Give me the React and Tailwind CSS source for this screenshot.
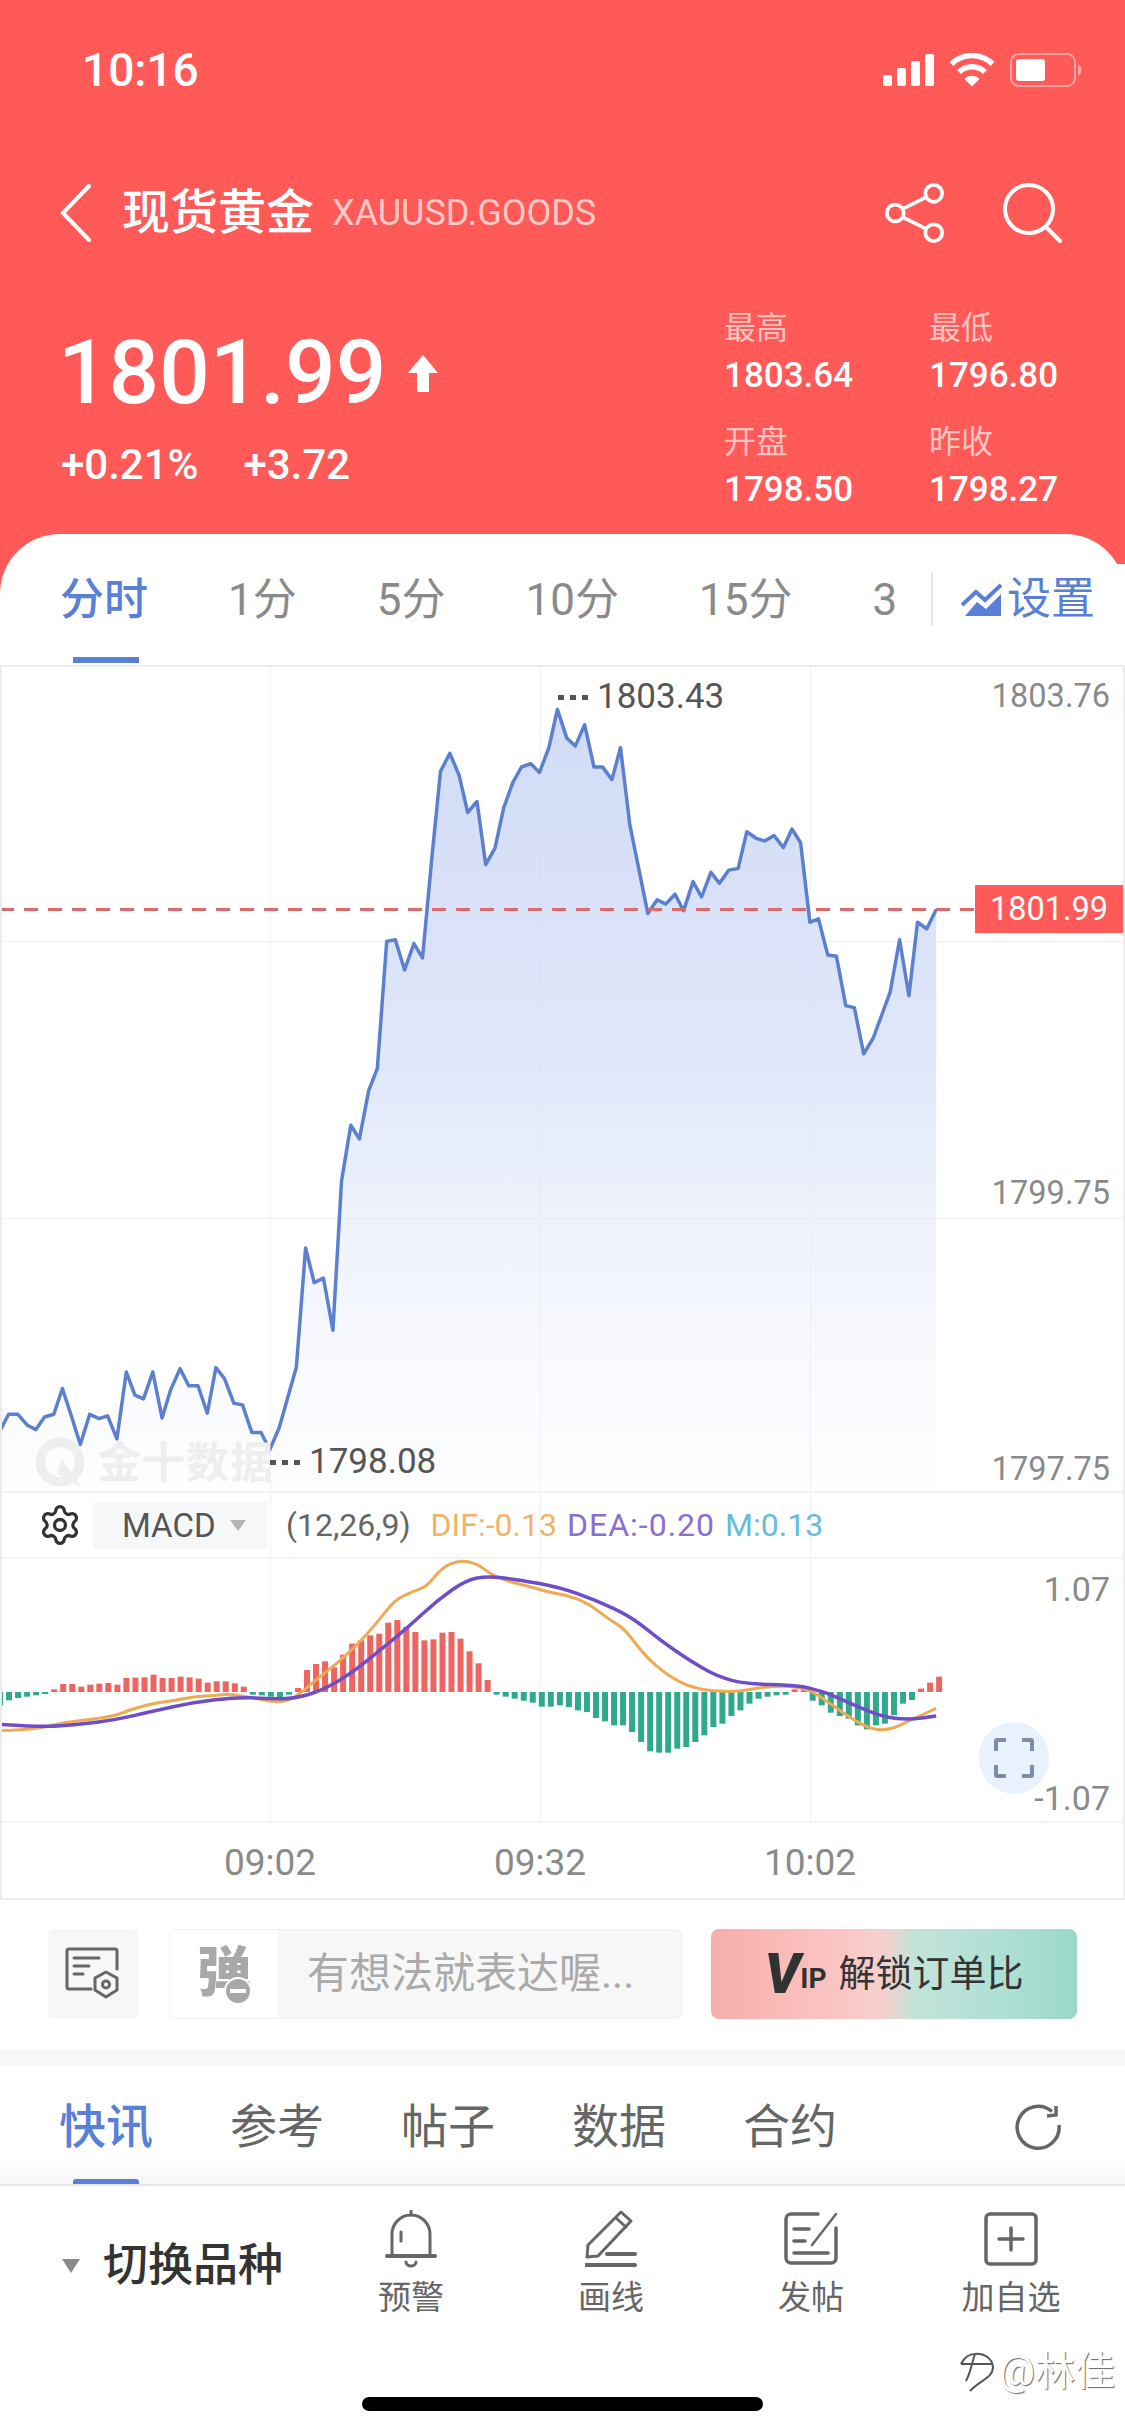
import { Settings } from 'lucide-react';

// traced from the reference, in zoomed-crop pixels
const PRICE_RAW = [[0,1405],[12,1375],[25,1375],[38,1395],[50,1403],[62,1380],[75,1375],[87,1328],[100,1380],[112,1430],[125,1375],[138,1383],[150,1378],[163,1420],[176,1298],[188,1340],[200,1347],[213,1298],[226,1382],[238,1330],[251,1292],[263,1323],[276,1323],[289,1373],[301,1290],[313,1310],[326,1355],[338,1358],[351,1408],[364,1408],[376,1440],[389,1400],[401,1345],[413,1290],[426,1072],[438,1135],[451,1127],[464,1222],[476,950],[489,848],[501,873],[514,785],[526,745],[539,513],[551,510],[564,565],[577,517],[589,543],[602,360],[614,203],[627,170],[640,210],[652,278],[665,258],[677,373],[690,343],[702,270],[715,223],[727,195],[740,189],[752,205],[765,160],[777,90],[790,142],[802,157],[815,118],[828,195],[840,195],[853,218],[865,160],[878,300],[890,378],[903,462],[916,437],[928,445],[941,427],[953,457],[966,404],[978,432],[991,387],[1003,407],[1016,383],[1029,380],[1041,313],[1054,325],[1066,330],[1079,320],[1092,342],[1104,308],[1116,333],[1129,478],[1141,472],[1154,538],[1166,540],[1179,630],[1191,634],[1204,718],[1217,690],[1229,648],[1241,605],[1254,510],[1267,612],[1279,478],[1292,490],[1305,455]];
const HIST = [-40,-25,-18,-14,-10,-6,8,24,24,16,22,25,27,22,42,43,44,52,42,42,46,44,40,28,32,32,26,16,-8,-10,-14,-16,-8,12,66,84,92,74,112,145,155,170,175,208,216,195,180,155,158,178,180,160,122,86,36,-8,-14,-20,-26,-32,-44,-44,-40,-45,-55,-60,-78,-88,-100,-100,-120,-150,-178,-182,-182,-170,-165,-150,-130,-105,-95,-72,-55,-35,-20,-14,-10,-8,8,8,-26,-40,-62,-72,-80,-100,-112,-100,-95,-70,-35,-24,10,28,46];
const DIF_RAW = [[0,812],[30,810],[60,803],[90,787],[120,780],[160,768],[180,750],[210,732],[240,722],[270,710],[300,706],[320,702],[350,712],[385,728],[410,716],[440,660],[470,610],[500,550],[525,490],[550,420],[575,395],[595,380],[615,325],[640,300],[665,310],[685,345],[710,365],[740,380],[765,397],[790,405],[820,430],[850,480],[870,505],[900,590],[930,645],[960,680],[990,693],[1030,695],[1060,682],[1100,677],[1130,690],[1160,735],[1190,780],[1215,808],[1240,810],[1265,785],[1305,745]];
const DEA_RAW = [[0,793],[60,802],[110,793],[160,780],[210,755],[270,727],[330,712],[370,715],[410,717],[450,690],[490,640],[530,570],[570,500],[610,420],[650,360],[680,348],[720,358],[780,382],[830,420],[880,470],[920,540],[960,600],[1000,650],[1040,672],[1110,675],[1150,695],[1190,735],[1230,770],[1265,780],[1305,768]];

const priceLine = PRICE_RAW.map(([x, y]) => [x / 1.394, 660 + y / 1.823]);
const macdPoint = ([x, y]) => [x / 1.394, 1460 + y / 3];
const toPoints = (pts) => pts.map(([x, y]) => `${x.toFixed(1)},${y.toFixed(1)}`).join(' ');

function smoothPath(pts) {
  let d = `M${pts[0][0]} ${pts[0][1]}`;
  for (let i = 1; i < pts.length - 1; i++) {
    const mx = (pts[i][0] + pts[i + 1][0]) / 2;
    const my = (pts[i][1] + pts[i + 1][1]) / 2;
    d += ` Q${pts[i][0]} ${pts[i][1]} ${mx} ${my}`;
  }
  const last = pts[pts.length - 1];
  return `${d} L${last[0]} ${last[1]}`;
}

function GridLines() {
  return (
    <>
      <div className="absolute top-0 bottom-0 left-[268px] w-px bg-[#eff1f4]" />
      <div className="absolute top-0 bottom-0 left-[538px] w-px bg-[#eff1f4]" />
      <div className="absolute top-0 bottom-0 left-[808px] w-px bg-[#eff1f4]" />
    </>
  );
}

function ExtremeDots() {
  return (
    <span className="flex gap-[6px]">
      <span className="h-[5px] w-[6px] bg-[#555555]" />
      <span className="h-[5px] w-[6px] bg-[#555555]" />
      <span className="h-[5px] w-[6px] bg-[#555555]" />
    </span>
  );
}

function PricePane() {
  const area = toPoints([...priceLine, [936, 1493], [0, 1493]]);
  return (
    <div className="relative h-[826px] border-b-2 border-[#f2f3f5]">
      <GridLines />
      <div className="absolute left-0 right-0 top-[274px] h-px bg-[#eff1f4]" />
      <div className="absolute left-0 right-0 top-[551px] h-px bg-[#eff1f4]" />
      <svg className="absolute inset-0" width="1121" height="826" viewBox="2 667 1121 826">
        <defs>
          <linearGradient id="priceFill" gradientUnits="userSpaceOnUse" x1="0" y1="709" x2="0" y2="1493">
            <stop offset="0" stopColor="#cbd7f5" stopOpacity="0.9" />
            <stop offset="0.45" stopColor="#d8e1f8" stopOpacity="0.8" />
            <stop offset="1" stopColor="#eef2fd" stopOpacity="0.1" />
          </linearGradient>
        </defs>
        <polygon points={area} fill="url(#priceFill)" />
        <polyline points={toPoints(priceLine)} fill="none" stroke="#5c80d0" strokeWidth="3.5" strokeLinejoin="round" />
        <line x1="0" y1="909.5" x2="975" y2="909.5" stroke="#dd6a6a" strokeWidth="3" strokeDasharray="14 10" />
      </svg>

      {/* watermark */}
      <div className="absolute left-[32px] top-[769px] flex items-center gap-[12px]">
        <svg width="52" height="54" viewBox="0 0 50 52">
          <circle cx="25" cy="25" r="19" fill="none" stroke="#eceef0" strokeWidth="9" />
          <path d="M27 22 L46 50 L22 36 Z" fill="#eceef0" />
        </svg>
        <span className="text-[43px] leading-none font-bold tracking-[1px] text-[#eceef0]">金十数据</span>
      </div>

      <span className="absolute right-[13px] top-[11px] text-[32.5px] leading-[36px] text-[#8a8a8a]">1803.76</span>
      <span className="absolute right-[13px] top-[508px] text-[32.5px] leading-[36px] text-[#8a8a8a]">1799.75</span>
      <span className="absolute right-[13px] top-[784px] text-[32.5px] leading-[36px] text-[#8a8a8a]">1797.75</span>
      <div className="absolute right-0 top-[218px] flex h-[48px] w-[148px] items-center justify-center bg-[#ff5a57] text-[32.5px] text-white">
        1801.99
      </div>

      <div className="absolute left-[556px] top-[12px] flex items-center gap-[9px] text-[35px] leading-[36px] text-[#555555]">
        <ExtremeDots />
        <span>1803.43</span>
      </div>
      <div className="absolute left-[268px] top-[777px] flex items-center gap-[9px] text-[35px] leading-[36px] text-[#555555]">
        <ExtremeDots />
        <span>1798.08</span>
      </div>
    </div>
  );
}

function MacdHeader() {
  return (
    <div className="relative flex h-[66px] items-center border-b-2 border-[#f2f3f5] text-[32px] leading-none">
      <GridLines />
      <Settings className="relative ml-[36px] h-[44px] w-[44px] text-[#333333]" strokeWidth={1.8} />
      <div className="relative ml-[11px] flex h-[47px] w-[175px] items-center bg-[#f6f7f9] pl-[29px] text-[33px] text-[#555555]">
        <span>MACD</span>
        <span className="ml-[14px] h-0 w-0 border-x-[8px] border-t-[11px] border-x-transparent border-t-[#b5b5b5]" />
      </div>
      <span className="relative ml-[18px] text-[#666666]">(12,26,9)</span>
      <span className="relative ml-[20px] text-[#f0b36a]">DIF:-0.13</span>
      <span className="relative ml-[10px] tracking-[1px] text-[#8a6fd0]">DEA:-0.20</span>
      <span className="relative ml-[10px] text-[#68bcd8]">M:0.13</span>
    </div>
  );
}

function MacdPane() {
  return (
    <div className="relative h-[264px] border-b-2 border-[#f2f3f5]">
      <GridLines />
      <svg className="absolute inset-0" width="1121" height="264" viewBox="2 1559 1121 264">
        {HIST.map((v, i) => {
          const h = Math.abs(v) / 3;
          return (
            <rect
              key={i}
              x={i * 9.03 - 3}
              y={v > 0 ? 1692 - h : 1692}
              width="6"
              height={h}
              fill={v > 0 ? '#ee6460' : '#2fa98c'}
            />
          );
        })}
        <path d={smoothPath(DIF_RAW.map(macdPoint))} fill="none" stroke="#eeaa55" strokeWidth="3" />
        <path d={smoothPath(DEA_RAW.map(macdPoint))} fill="none" stroke="#6f4cc8" strokeWidth="3.5" />
      </svg>
      <span className="absolute right-[13px] top-[12px] text-[34px] leading-[36px] text-[#8a8a8a]">1.07</span>
      <span className="absolute right-[13px] top-[221px] text-[34px] leading-[36px] text-[#8a8a8a]">-1.07</span>
      <div className="absolute left-[977px] top-[163px] flex h-[72px] w-[70px] items-center justify-center rounded-full bg-[#e9f1fc]">
        <svg width="40" height="40" viewBox="0 0 40 40" fill="none" stroke="#7e8cab" strokeWidth="4">
          <path d="M2 13 V3 a1 1 0 0 1 1-1 H12" />
          <path d="M28 2 H37 a1 1 0 0 1 1 1 V13" />
          <path d="M2 27 V37 a1 1 0 0 0 1 1 H12" />
          <path d="M28 38 H37 a1 1 0 0 0 1-1 V27" />
        </svg>
      </div>
    </div>
  );
}

function TimeAxis() {
  return (
    <div className="relative h-[75px] text-[37px] leading-none text-[#8a8a8a]">
      <span className="absolute left-[268px] top-[21px] -translate-x-1/2">09:02</span>
      <span className="absolute left-[538px] top-[21px] -translate-x-1/2">09:32</span>
      <span className="absolute left-[808px] top-[21px] -translate-x-1/2">10:02</span>
    </div>
  );
}

function Stat({ label, value }) {
  return (
    <div className="flex flex-col">
      <span className="text-[32px] leading-[46px] text-[#ffc4c2]">{label}</span>
      <span className="mt-[3px] text-[35px] leading-[44px] font-medium text-white">{value}</span>
    </div>
  );
}

function ToolItem({ label, children }) {
  return (
    <div className="flex w-[200px] flex-col items-center">
      <div className="flex h-[60px] items-center justify-center">{children}</div>
      <span className="mt-[7px] text-[33px] leading-[44px] text-[#666666]">{label}</span>
    </div>
  );
}

export default function App() {
  return (
    <div className="relative flex h-[2436px] w-[1125px] flex-col overflow-hidden bg-[#ff5a57] font-['Roboto','Noto_Sans_CJK_SC',sans-serif]">
      {/* status bar */}
      <div className="flex h-[138px] items-center justify-between pl-[82px] pr-[43px] pt-[1px] text-white">
        <span className="text-[46px] leading-none font-medium">10:16</span>
        <div className="flex items-center gap-[15px]">
          <svg width="51" height="32" viewBox="0 0 51 32" fill="#ffffff">
            <rect x="0" y="21" width="9" height="11" rx="2" />
            <rect x="14" y="14" width="9" height="18" rx="2" />
            <rect x="28" y="7" width="9" height="25" rx="2" />
            <rect x="42" y="0" width="9" height="32" rx="2" />
          </svg>
          <svg width="46" height="34" viewBox="0 0 46 34" fill="none" stroke="#ffffff" strokeWidth="5.5">
            <path d="M2.5 11 a29 29 0 0 1 41 0" />
            <path d="M10 19 a18.5 18.5 0 0 1 26 0" />
            <path d="M23 33.5 L15.5 26 a10.5 10.5 0 0 1 15 0 Z" fill="#ffffff" stroke="none" />
          </svg>
          <svg width="72" height="34" viewBox="0 0 72 34">
            <rect x="1" y="1" width="64" height="32" rx="8" fill="none" stroke="#ffffff" strokeOpacity="0.45" strokeWidth="2" />
            <rect x="6" y="6" width="29" height="22" rx="3" fill="#ffffff" />
            <path d="M68 11 a7 7 0 0 1 0 12 Z" fill="#ffffff" fillOpacity="0.45" />
          </svg>
        </div>
      </div>

      {/* nav */}
      <div className="flex h-[150px] items-center pl-[60px] pr-[61px] text-white">
        <svg width="32" height="58" viewBox="0 0 32 58" fill="none" stroke="#ffffff" strokeWidth="4" strokeLinecap="round">
          <polyline points="29,2 3,29 29,56" />
        </svg>
        <span className="ml-[30px] text-[48px] leading-none font-medium">现货黄金</span>
        <span className="ml-[18px] text-[36px] leading-none text-[#ffc9c7]">XAUUSD.GOODS</span>
        <svg className="ml-auto" width="60" height="62" viewBox="0 0 64 66" fill="none" stroke="#ffffff" strokeWidth="4">
          <circle cx="52" cy="12" r="9" />
          <circle cx="11" cy="33" r="9" />
          <circle cx="52" cy="54" r="9" />
          <line x1="20" y1="28" x2="44" y2="16" />
          <line x1="20" y1="38" x2="44" y2="50" />
        </svg>
        <svg className="ml-[57px]" width="62" height="62" viewBox="0 0 62 62" fill="none" stroke="#ffffff" strokeWidth="4" strokeLinecap="round">
          <circle cx="27" cy="27" r="24" />
          <line x1="45" y1="46" x2="58" y2="59" />
        </svg>
      </div>

      {/* quote */}
      <div className="flex h-[246px] text-white">
        <div className="flex w-[724px] shrink-0 flex-col pl-[58px] pt-[39px]">
          <div className="flex items-center">
            <span className="text-[89px] leading-[92px] font-medium">1801.99</span>
            <svg className="ml-[22px]" width="30" height="37" viewBox="0 0 30 37" fill="#ffffff">
              <path d="M15 0 L30 18 H21 V37 H9 V18 H0 Z" />
            </svg>
          </div>
          <div className="ml-[3px] mt-[23px] flex gap-[45px] text-[42px] leading-[46px] font-medium">
            <span>+0.21%</span>
            <span>+3.72</span>
          </div>
        </div>
        <div className="grid grid-cols-[205px_196px] content-start gap-y-[21px] pt-[17px]">
          <Stat label="最高" value="1803.64" />
          <Stat label="最低" value="1796.80" />
          <Stat label="开盘" value="1798.50" />
          <Stat label="昨收" value="1798.27" />
        </div>
      </div>

      {/* white sheet */}
      <div className="flex flex-1 flex-col rounded-t-[60px] bg-white">
        {/* period tabs */}
        <div className="relative flex h-[131px] items-center gap-[80px] overflow-hidden pl-[60px] text-[44px] leading-none text-[#8a8a8a]">
          <span className="font-medium text-[#5a7fd6]">分时</span>
          <span>1分</span>
          <span>5分</span>
          <span>10分</span>
          <span>15分</span>
          <span>3</span>
          <div className="absolute bottom-[2px] left-[73px] h-[6px] w-[66px] bg-[#5a7fd6]" />
          <div className="absolute right-0 top-[30px] flex h-[70px] items-center bg-white">
            <div className="h-[54px] w-[2px] bg-[#e4e4e4]" />
            <svg className="ml-[28px]" width="41" height="33" viewBox="0 0 41 33" fill="#5a7fd6">
              <path d="M1 22 L15 9 L24 17 L40 2" fill="none" stroke="#5a7fd6" strokeWidth="4" />
              <path d="M4 33 L16 19 L25 26 L40 11 V33 Z" />
            </svg>
            <span className="ml-[5px] mr-[30px] text-[#5a7fd6]">设置</span>
          </div>
        </div>

        {/* chart */}
        <div className="border-x-2 border-y-2 border-[#ececee]">
          <PricePane />
          <MacdHeader />
          <MacdPane />
          <TimeAxis />
        </div>

        {/* input row */}
        <div className="flex h-[150px] items-start pl-[48px] pt-[29px]">
          <div className="flex h-[90px] w-[90px] items-center justify-center rounded-[6px] bg-[#f7f7f7]">
            <svg width="56" height="54" viewBox="0 0 56 54" fill="none" stroke="#666666" strokeWidth="3" strokeLinecap="round" strokeLinejoin="round">
              <path d="M26 42 H4 a2 2 0 0 1-2-2 V4 a2 2 0 0 1 2-2 H50 a2 2 0 0 1 2 2 V22" />
              <path d="M9 11 H34 M9 19 H24 M9 27 H18" />
              <path d="M41 25 L52 31 V43 L41 50 L30 43 V31 Z" />
              <circle cx="41" cy="37.5" r="3.5" />
            </svg>
          </div>
          <div className="ml-[31px] flex h-[90px] w-[513px] overflow-hidden rounded-[6px] border border-[#f1f1f1] bg-[#f7f7f7]">
            <div className="relative flex w-[108px] items-center justify-center bg-white text-[54px] leading-none font-black text-[#a8a8a8]">
              弹
              <span className="absolute left-[54px] top-[47px] flex h-[28px] w-[28px] items-center justify-center rounded-full border-2 border-white bg-[#a8a8a8]">
                <span className="h-[4px] w-[16px] bg-white" />
              </span>
            </div>
            <span className="ml-[29px] self-center whitespace-nowrap text-[42px] leading-none text-[#aaaaaa]">有想法就表达喔...</span>
          </div>
          <div className="ml-[29px] flex h-[90px] w-[366px] items-center justify-center rounded-[8px] bg-[linear-gradient(90deg,#f6aeab_0%,#fbc5c3_35%,#f5d0cd_47%,#c2e3da_56%,#aee0d4_80%,#9bd8c8_100%)] text-[#333333]">
            <span className="text-[56px] leading-none font-black italic text-[#2f3433]">V</span>
            <span className="mt-[10px] text-[28px] leading-none font-bold text-[#2f3433]">IP</span>
            <span className="ml-[12px] text-[37px] leading-none">解锁订单比</span>
          </div>
        </div>

        <div className="h-[16px] bg-[#f7f7f8]" />

        {/* news tabs */}
        <div className="relative flex h-[120px] items-center gap-[77px] border-b-2 border-[#e4e6ea] bg-[linear-gradient(180deg,#ffffff_80%,#f5f6f8_100%)] pl-[59px] pt-[2px] text-[47px] leading-none text-[#666666]">
          <span className="font-medium text-[#5a7fd6]">快讯</span>
          <span>参考</span>
          <span>帖子</span>
          <span>数据</span>
          <span>合约</span>
          <svg className="absolute left-[1014px] top-[37px]" width="48" height="48" viewBox="0 0 48 48" fill="none" stroke="#666666" strokeWidth="3.5">
            <path d="M45 22 A21 21 0 1 1 38 8.5" />
            <path d="M33 13 L42 12 L42 3" />
          </svg>
          <div className="absolute bottom-0 left-[73px] h-[5px] w-[66px] rounded-t-[3px] bg-[#5a7fd6]" />
        </div>

        {/* toolbar */}
        <div className="flex h-[211px] items-start pt-[23px]">
          <div className="mt-[34px] flex w-[311px] items-center pl-[62px]">
            <span className="h-0 w-0 border-x-[9px] border-t-[14px] border-x-transparent border-t-[#8a8a8a]" />
            <span className="ml-[23px] text-[45px] leading-none font-medium text-[#333333]">切换品种</span>
          </div>
          <ToolItem label="预警">
            <svg width="52" height="58" viewBox="0 0 52 58" fill="none" stroke="#666666" strokeWidth="3" strokeLinecap="round">
              <path d="M7 46 V24 a19 19 0 0 1 38 0 V46" />
              <path d="M26 1 V5 M16 22 V31" />
              <path d="M2 46 H50" strokeWidth="4" />
              <path d="M21 52 a5 4 0 0 0 10 0" />
            </svg>
          </ToolItem>
          <ToolItem label="画线">
            <svg width="52" height="58" viewBox="0 0 52 58" fill="none" stroke="#666666" strokeWidth="3" strokeLinecap="round" strokeLinejoin="round">
              <path d="M2 47 L3 35 L36 2 L46 11 L13 46 Z" />
              <path d="M31 8 L41 17" />
              <path d="M22 44 H50" strokeWidth="4" />
              <path d="M1 55 H50" strokeWidth="4" />
            </svg>
          </ToolItem>
          <ToolItem label="发帖">
            <svg width="54" height="54" viewBox="0 0 54 54" fill="none" stroke="#666666" strokeWidth="3.5" strokeLinecap="round">
              <path d="M34 2 H7 a5 5 0 0 0-5 5 V46 a5 5 0 0 0 5 5 H47 a5 5 0 0 0 5-5 V16" />
              <path d="M10 17 H25 M10 29 H21 M10 41 H44" />
              <path d="M28 33 L52 2" strokeWidth="2.5" />
            </svg>
          </ToolItem>
          <ToolItem label="加自选">
            <svg width="54" height="54" viewBox="0 0 54 54" fill="none" stroke="#666666" strokeWidth="3.5" strokeLinecap="round">
              <rect x="2" y="2" width="50" height="50" rx="4" />
              <path d="M27 16 V38 M15 27 H39" />
            </svg>
          </ToolItem>
        </div>

        <div className="mx-auto h-[14px] w-[401px] rounded-full bg-black" />
      </div>

      {/* repost watermark */}
      <div className="absolute left-[958px] top-[2350px] flex items-center whitespace-nowrap text-[40px] leading-none text-white [text-shadow:1px_1px_1px_#666666]">
        <svg width="38" height="44" viewBox="0 0 38 44" fill="none" stroke="#555555" strokeWidth="2">
          <path d="M3 14 C6 8 10 4 17 4 C26 3 34 8 35 17 C35 28 22 30 12 41" />
          <path d="M3 14 H35" />
          <path d="M17 4 C14 12 13 22 8 31" />
        </svg>
        <span className="ml-[3px]">@林佳</span>
      </div>
    </div>
  );
}
